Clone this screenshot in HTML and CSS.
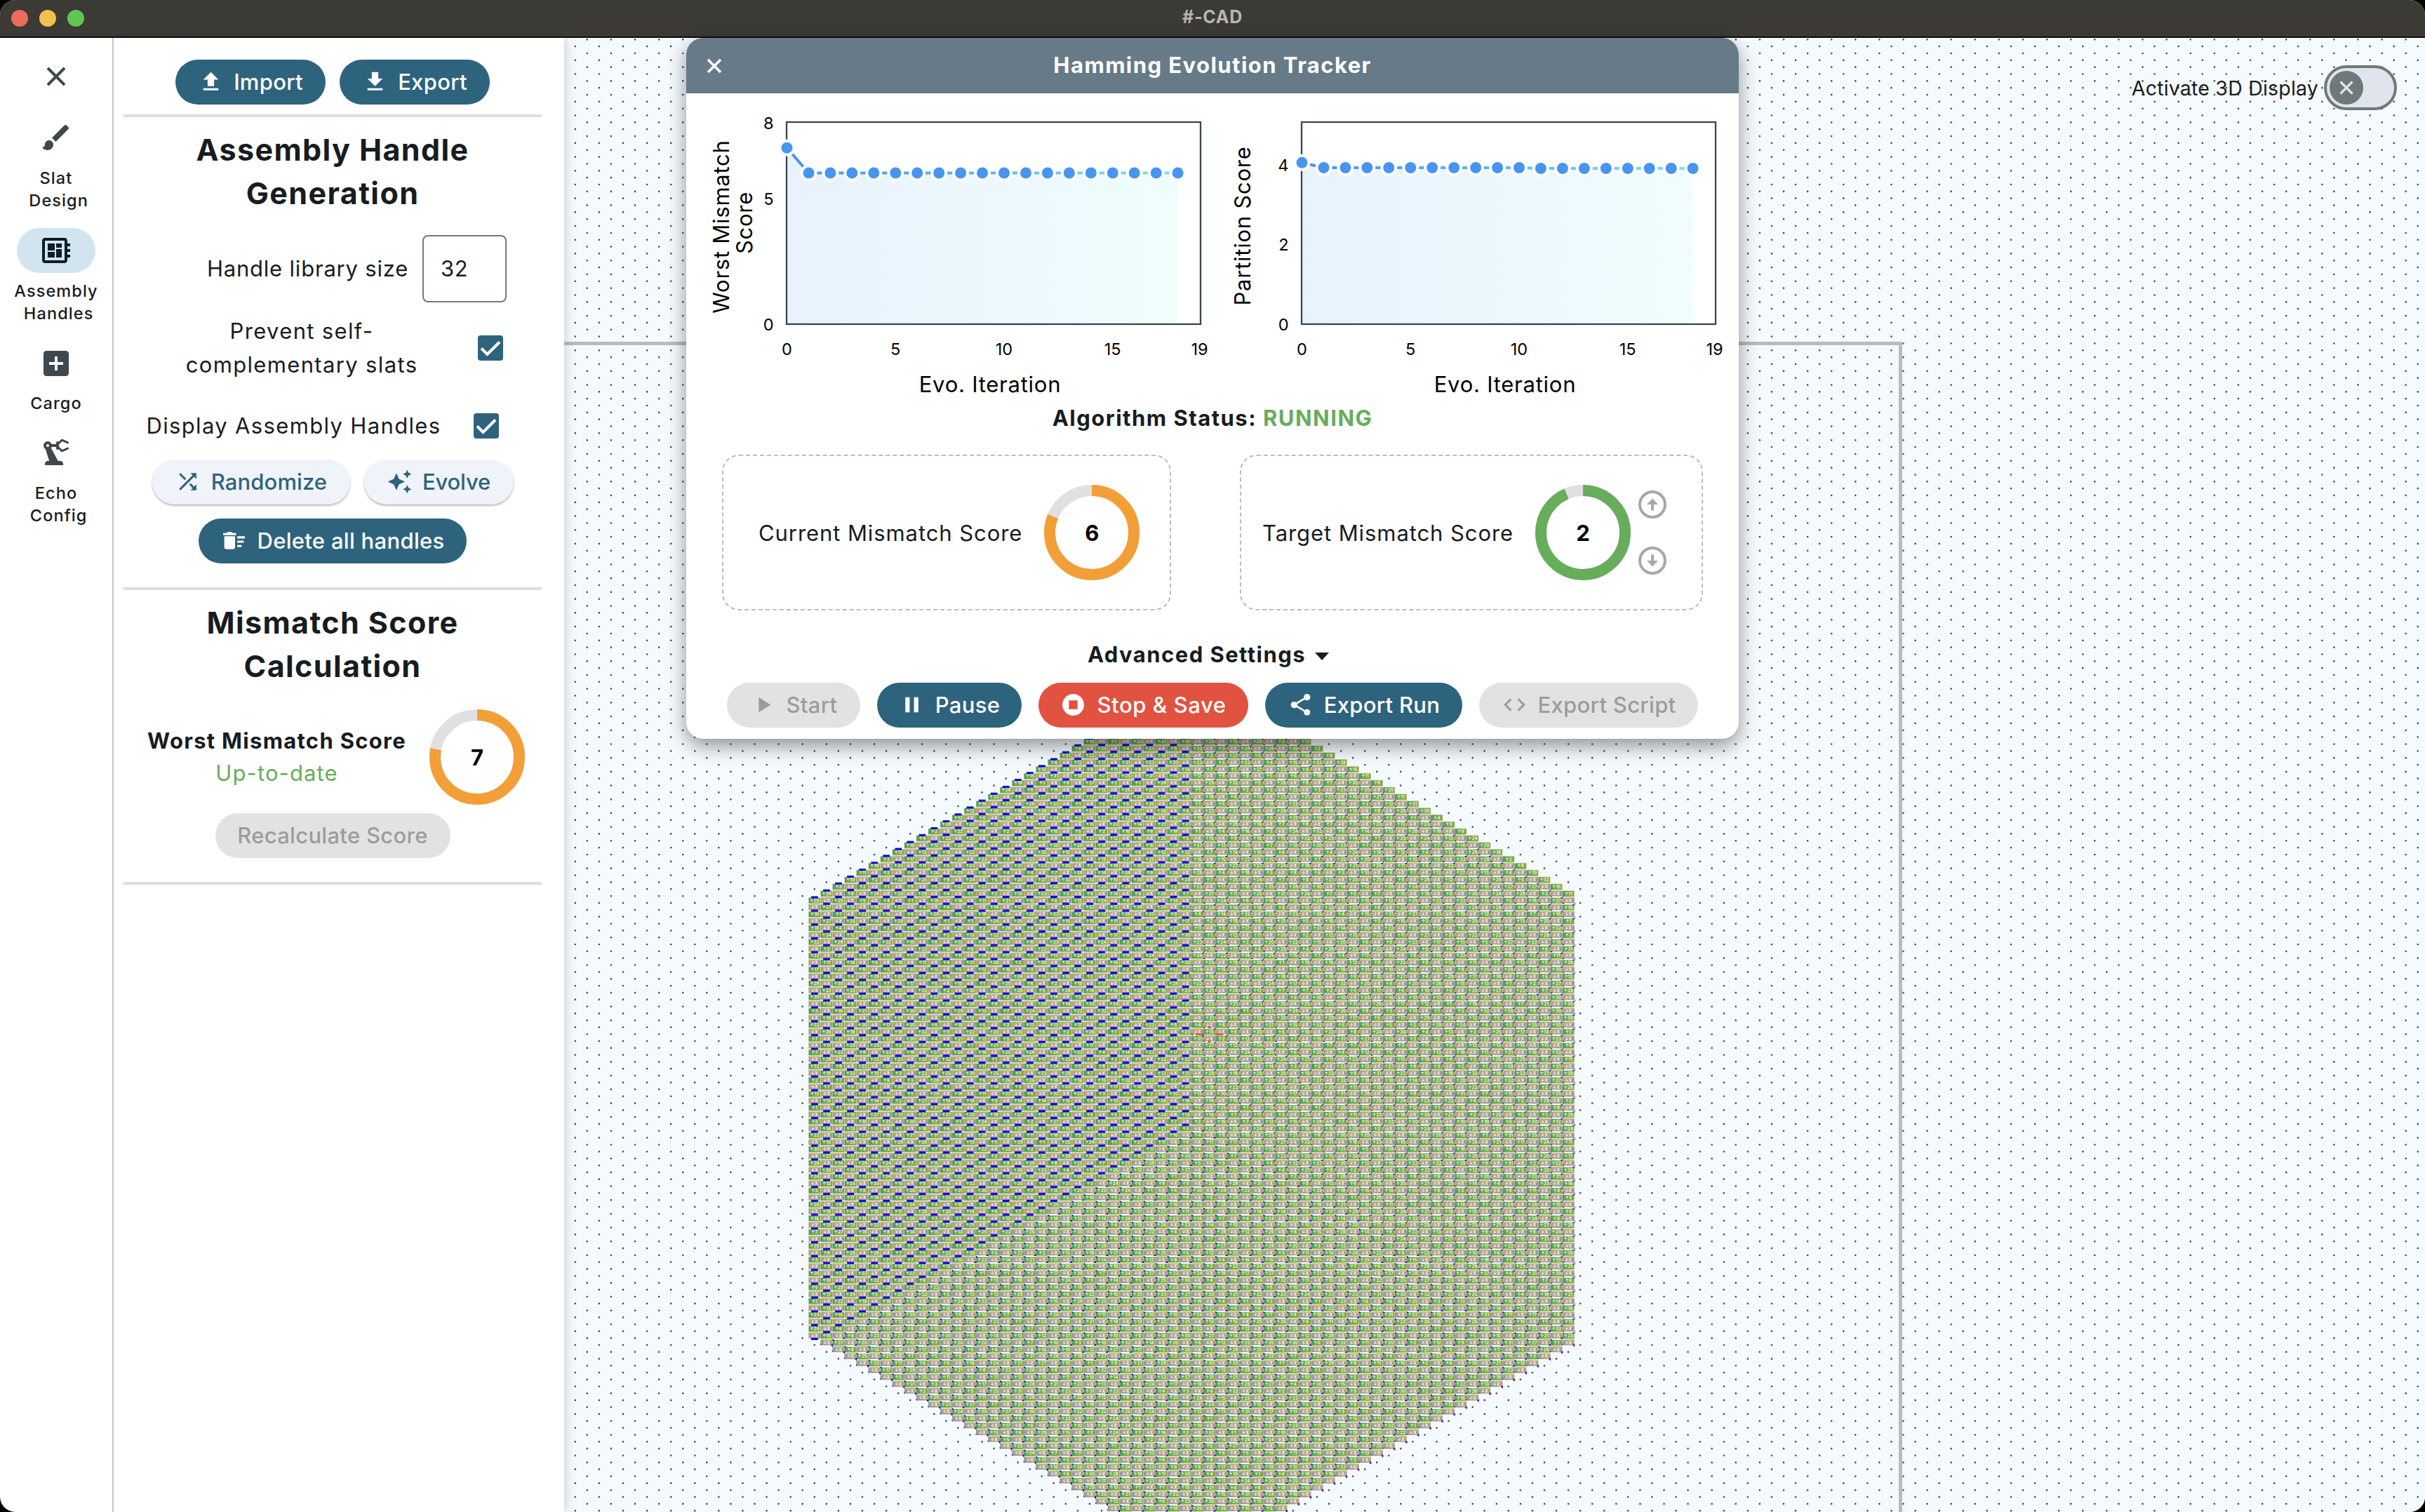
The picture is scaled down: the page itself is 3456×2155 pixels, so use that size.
FILE: index.html
```html
<!DOCTYPE html>
<html lang="en">
<head>
<meta charset="utf-8">
<title>#-CAD</title>
<link rel="stylesheet" href="styles.css">
</head>
<body>
<div class="window">
  <header class="titlebar">
    <div class="lights"><i class="light red"></i><i class="light yellow"></i><i class="light green"></i></div>
    <div class="window-title">#-CAD</div>
  </header>
  <div class="body">
    <nav class="rail">
      <svg class="rail-close" viewBox="0 0 28 28"><path d="M2 2 26 26M26 2 2 26" fill="none" stroke="#3f484c" stroke-width="4"/></svg>
      <a class="rail-item">
        <span class="pill"><svg class="icon48" viewBox="0 0 24 24"><path d="M7 14c-1.66 0-3 1.34-3 3 0 1.31-1.16 2-2 2 .92 1.22 2.49 2 4 2 2.21 0 4-1.79 4-4 0-1.66-1.34-3-3-3zm13.71-9.37l-1.34-1.34c-.39-.39-1.02-.39-1.41 0L9 12.25 11.75 15l8.96-8.96c.39-.39.39-1.02 0-1.41z"/></svg></span>
        <span class="rail-label">Slat
 Design</span>
      </a>
      <a class="rail-item active">
        <span class="pill"><svg class="icon48" viewBox="0 0 24 24"><path d="M22 9V7h-2V5c0-1.100-.9-2-2-2H4c-1.100 0-2 .9-2 2v14c0 1.100.9 2 2 2h14c1.100 0 2-.9 2-2v-2h2v-2h-2v-2h2v-2h-2V9h2zm-4 10H4V5h14v14zM6 13h5v4H6v-4zm6-6h4v3h-4V7zM6 7h5v5H6V7zm6 4h4v6h-4v-6z"/></svg></span>
        <span class="rail-label">Assembly
 Handles</span>
      </a>
      <a class="rail-item single">
        <span class="pill"><svg class="icon48" viewBox="0 0 24 24"><path d="M19 3H5c-1.110 0-2 .9-2 2v14c0 1.100.89 2 2 2h14c1.100 0 2-.9 2-2V5c0-1.100-.9-2-2-2zm-2 10h-4v4h-2v-4H7v-2h4V7h2v4h4v2z"/></svg></span>
        <span class="rail-label">Cargo</span>
      </a>
      <a class="rail-item">
        <span class="pill"><svg class="icon48" viewBox="0 0 24 24"><path d="M19.930 8.350l-3.600 1.680L14 7.700V6.300l2.330-2.330 3.600 1.680c.38.18.82.010 1-.36.18-.38.010-.82-.36-1l-3.920-1.830c-.38-.18-.83-.1-1.130.2L13.780 4.400c-.18-.24-.46-.4-.78-.4-.55 0-1 .45-1 1v1H8.820C8.400 4.840 7.300 4 6 4 4.340 4 3 5.340 3 7c0 1.100.6 2.050 1.480 2.580L7.080 18H6c-1.100 0-2 .9-2 2v1h13v-1c0-1.100-.9-2-2-2h-1.620L8.410 8.770c.17-.24.310-.49.410-.77H12v1c0 .55.45 1 1 1 .32 0 .6-.16.780-.4l1.740 1.740c.3.3.75.380 1.130.2l3.920-1.830c.38-.18.540-.62.360-1-.18-.37-.62-.54-1-.36zM6 8c-.55 0-1-.45-1-1s.45-1 1-1 1 .45 1 1-.45 1-1 1z"/></svg></span>
        <span class="rail-label">Echo
 Config</span>
      </a>
    </nav>

    <aside class="panel">
      <div class="row io">
        <button class="btn primary b-io"><svg class="icon36" viewBox="0 0 24 24"><path d="M5 20h14v-2H5v2zM5 10h4v6h6v-6h4l-7-7-7 7z"/></svg><span>Import</span></button>
        <button class="btn primary b-io"><svg class="icon36" viewBox="0 0 24 24"><path d="M19 9h-4V3H9v6H5l7 7 7-7zM5 18v2h14v-2H5z"/></svg><span>Export</span></button>
      </div>
      <hr class="rule">
      <h2 class="heading">Assembly Handle<br>Generation</h2>
      <div class="row library"><label>Handle library size</label><div class="field">32</div></div>
      <div class="row prevent"><label>Prevent self-<br>complementary slats</label>
        <span class="check"><svg viewBox="0 0 36 36"><path d="M5 18.500 13.500 27 31 9.500" fill="none" stroke="#fff" stroke-width="4"/></svg></span></div>
      <div class="row display"><label>Display Assembly Handles</label>
        <span class="check"><svg viewBox="0 0 36 36"><path d="M5 18.500 13.500 27 31 9.500" fill="none" stroke="#fff" stroke-width="4"/></svg></span></div>
      <div class="row tools">
        <button class="btn tonal b-rand"><svg class="icon36" viewBox="0 0 24 24"><path d="M10.590 9.170L5.410 4 4 5.410l5.170 5.170 1.420-1.410zM14.500 4l2.040 2.040L4 18.590 5.410 20 17.960 7.460 20 9.500V4h-5.500zm.330 9.410l-1.410 1.410 3.130 3.130L14.500 20H20v-5.500l-2.040 2.040-3.130-3.130z"/></svg><span>Randomize</span></button>
        <button class="btn tonal b-evo"><svg class="icon36" viewBox="0 0 24 24"><path d="M19 9l1.250-2.750L23 5l-2.750-1.250L19 1l-1.250 2.750L15 5l2.750 1.250L19 9zm-7.500.5L9 4 6.500 9.500 1 12l5.500 2.500L9 20l2.500-5.500L17 12l-5.500-2.500zM19 15l-1.250 2.750L15 19l2.750 1.250L19 23l1.250-2.750L23 19l-2.750-1.250L19 15z"/></svg><span>Evolve</span></button>
      </div>
      <button class="btn primary b-del"><svg class="icon36" viewBox="0 0 24 24"><path d="M15 16h4v2h-4zm0-8h7v2h-7zm0 4h6v2h-6zM3 18c0 1.100.9 2 2 2h6c1.100 0 2-.9 2-2V8H3v10zM14 5h-3l-1-1H6L5 5H2v2h12z"/></svg><span>Delete all handles</span></button>
      <hr class="rule second">
      <h2 class="heading">Mismatch Score<br>Calculation</h2>
      <div class="row score">
        <div class="score-text"><b>Worst Mismatch Score</b><span class="ok">Up-to-date</span></div>
        <div class="ring"><svg viewBox="0 0 136 136"><circle class="track" cx="68" cy="68" r="60"/><circle class="arc orange" cx="68" cy="68" r="60" pathLength="100" stroke-dasharray="78 100"/></svg><b>7</b></div>
      </div>
      <button class="btn disabled b-recalc"><span>Recalculate Score</span></button>
      <hr class="rule third">
    </aside>

    <main class="workspace">
      <svg class="lattice" viewBox="804 54 2652 2101">
        <defs>
          <linearGradient id="leaf"><stop offset="0" stop-color="#4a9c5a"/><stop offset=".5" stop-color="#69a850"/><stop offset="1" stop-color="#7fac4e"/></linearGradient>
          <g id="num"><rect class="cream" y="-.8" width="17.100" height="10.600"/><rect x=".3" width="16.500" height="7.600" fill="url(#leaf)"/></g>
          <g id="xr"><rect class="cream" y="-.8" width="17.100" height="9.500"/><rect class="tan" x=".2" width="16.700" height="7.300"/><path class="gray" d="M16.900 0V7.300H6z"/></g>
          <g id="xl"><rect class="cream" y="-.8" width="17.100" height="8.600"/><rect class="tan" x=".2" width="16.700" height="7.300"/><path class="gray" d="M.2 0V7.300H11z"/></g>
          <g id="ga"><rect class="blue" x="3.700" y="7" width="9.800" height="3"/></g>
          <g id="gb"><path fill="#fff" d="M1 7.500 15 8.200 16.500 9.600 3 9.400z"/><path class="blue" d="M-.5 5.800 3.500 8.400.5 8.200zM17.600 6.800 18.400 7.600 16.800 11 13.500 9.300 17 9.300z"/></g>
          <g id="gc"><path fill="#fff" d="M1 9.600 3 8.300 16 7.500 14 9.400z"/><path class="blue" d="M17.500 5.500V8.300L13.500 8.300zM0 8.300V11L3 9.800z"/></g>
          <g id="gc-end"><path class="blue" d="M17.500 5.500V10L14.500 7.500zM-.5 5V7L1.500 7.300z"/></g>
        </defs>
        <path id="dots"/>
        <path d="M804 489.500H2708.500V2160" fill="none" stroke="#bbb" stroke-width="5"/>
        <g id="tiles"></g>
        <path fill="#e4533c" d="M1704 1472.700h11.300v3H1704zM1731.700 1472.700H1743v3h-11.300zM1721.700 1462.700h3.600v3.300h-3.600zM1721.700 1482.700h3.600v3.300h-3.600z"/>
      </svg>

      <div class="switch-row"><span>Activate 3D Display</span><div class="switch"><i class="knob"><svg viewBox="0 0 20 20"><path d="M1.500 1.500 18.500 18.500M18.500 1.500 1.500 18.500" fill="none" stroke="#e1e4e8" stroke-width="3.200"/></svg></i></div></div>

      <section class="dialog">
        <header class="dialog-head"><svg class="dialog-close" viewBox="0 0 22 22"><path d="M2 2 20 20M20 2 2 20" fill="none" stroke="#fff" stroke-width="3.600"/></svg><h3>Hamming Evolution Tracker</h3></header>
        <svg class="charts" viewBox="978 133 1500 436">
          <defs>
            <linearGradient id="line"><stop offset="0" stop-color="#4895ef"/><stop offset=".3" stop-color="#55a5f0"/><stop offset="1" stop-color="#80e0fa"/></linearGradient>
            <linearGradient id="area"><stop offset="0" stop-color="#e8f2fd"/><stop offset="1" stop-color="#f0fdfd"/></linearGradient>
          </defs>
          <g id="chart1"></g>
          <g id="chart2"></g>
          <g class="axis-title">
            <text x="1411" y="559">Evo. Iteration</text><text x="2145" y="559">Evo. Iteration</text>
            <text transform="translate(1038.500 323) rotate(-90)">Worst Mismatch</text>
            <text transform="translate(1071.500 317.500) rotate(-90)">Score</text>
            <text transform="translate(1782 322) rotate(-90)">Partition Score</text>
          </g>
        </svg>
        <p class="status">Algorithm Status: <span class="running">RUNNING</span></p>
        <div class="cards">
          <div class="card current"><span>Current Mismatch Score</span>
            <div class="ring"><svg viewBox="0 0 136 136"><circle class="track" cx="68" cy="68" r="60"/><circle class="arc orange" cx="68" cy="68" r="60" pathLength="100" stroke-dasharray="81.300 100"/></svg><b>6</b></div></div>
          <div class="card target"><span>Target Mismatch Score</span>
            <div class="ring"><svg viewBox="0 0 136 136"><circle class="track" cx="68" cy="68" r="60"/><circle class="arc leaf" cx="68" cy="68" r="60" pathLength="100" stroke-dasharray="93.600 100"/></svg><b>2</b></div>
            <div class="steppers">
              <svg viewBox="0 0 40 40"><circle cx="20" cy="20" r="18"/><path d="M20 28.500V14"/><path class="fill" d="M12 20 20 11.500 28 20z"/></svg>
              <svg viewBox="0 0 40 40"><circle cx="20" cy="20" r="18"/><path d="M20 11.500V26"/><path class="fill" d="M12 20 20 28.500 28 20z"/></svg>
            </div></div>
        </div>
        <p class="advanced"><span>Advanced Settings</span><i class="caret"></i></p>
        <div class="actions">
          <button class="btn disabled a1"><svg class="icon36" viewBox="0 0 24 24"><path d="M8 5v14l11-7z"/></svg><span>Start</span></button>
          <button class="btn primary a2"><svg class="icon36" viewBox="0 0 24 24"><path d="M6 19h4V5H6v14zm8-14v14h4V5h-4z"/></svg><span>Pause</span></button>
          <button class="btn danger a3"><svg class="icon36" viewBox="0 0 24 24"><path d="M12 2C6.480 2 2 6.480 2 12s4.480 10 10 10 10-4.480 10-10S17.520 2 12 2zm4 14H8V8h8v8z"/></svg><span>Stop &amp; Save</span></button>
          <button class="btn primary a4"><svg class="icon36" viewBox="0 0 24 24"><path d="M18 16.080c-.76 0-1.440.3-1.960.77L8.910 12.700c.05-.23.090-.46.090-.7s-.04-.47-.09-.7l7.050-4.110c.54.5 1.250.810 2.040.810 1.660 0 3-1.340 3-3s-1.340-3-3-3-3 1.340-3 3c0 .24.040.470.090.700L8.040 9.810C7.500 9.310 6.790 9 6 9c-1.660 0-3 1.340-3 3s1.340 3 3 3c.79 0 1.500-.31 2.040-.81l7.120 4.160c-.05.210-.08.430-.08.650 0 1.610 1.310 2.920 2.920 2.920 1.610 0 2.920-1.310 2.920-2.920s-1.310-2.920-2.920-2.920z"/></svg><span>Export Run</span></button>
          <button class="btn disabled a5"><svg class="icon36" viewBox="0 0 24 24"><path d="M9.400 16.600L4.800 12l4.600-4.600L8 6l-6 6 6 6 1.400-1.400zm5.200 0l4.600-4.600-4.600-4.600L16 6l6 6-6 6-1.400-1.400z"/></svg><span>Export Script</span></button>
        </div>
      </section>
    </main>
  </div>
</div>
<script src="app.js"></script>
</body>
</html>
```
FILE: app.js
```js
// Slat lattice: 64 columns of alternating handle-number and X tiles.
const PITCH_X = 17.052;
const PITCH_Y = 9.845;
const COLUMNS = 64;
const HALF = 32;
const LEFT = 1152.3;
const TOP = 1279.7;

let seed = 7;
function nextHandle() {
  seed = (seed * 1103515245 + 12345) % 2147483648;
  return 1 + Math.floor((seed / 2147483648) * 32);
}

// Background grid: zero-length round-capped strokes, one per lattice site.
function drawDots() {
  let d = '';
  for (let c = -21; c < 136; c++) {
    const x = (LEFT + 8.5 + c * PITCH_X).toFixed(1);
    const phase = Math.abs(c % 2) === 1 ? 56.3 : 66.1;
    for (let y = phase; y < 2160; y += 2 * PITCH_Y) d += `M${x} ${y.toFixed(1)}h0`;
  }
  document.getElementById('dots').setAttribute('d', d);
}

function drawLattice() {
  const tiles = [];
  const gaps = [];
  const labels = [];
  for (let c = 0; c < COLUMNS; c++) {
    const x = LEFT + c * PITCH_X;
    const first = c < HALF ? TOP - c * PITCH_Y : 1269.9 - (COLUMNS - 1 - c) * PITCH_Y;
    const last = c < HALF ? 1899.8 + c * PITCH_Y : 1909.8 + (COLUMNS - 1 - c) * PITCH_Y;
    const split = c < HALF ? 1908 - c * PITCH_Y : 1603 + (c - HALF) * PITCH_Y;
    if (c < HALF) gaps.push(`<use href="#ga" x="${x.toFixed(1)}" y="${(first - 9.3).toFixed(1)}"/>`);
    for (let y = first, i = 0; y < last + 1; y += PITCH_Y, i++) {
      if (y < 1030 || y > 2160) continue;
      const at = `x="${x.toFixed(1)}" y="${y.toFixed(1)}"`;
      const mid = (x + PITCH_X / 2).toFixed(1);
      const base = (y + 5.9).toFixed(1);
      if (i % 2 === 0) {
        tiles.push(`<use href="#num" ${at}/>`);
        labels.push(`<text x="${mid}" y="${base}">↑${nextHandle()}</text>`);
      } else {
        const upper = y + 7 < split;
        const end = y > last - 1;
        tiles.push(`<use href="#${upper ? 'xr' : 'xl'}" ${at}/>`);
        gaps.push(`<use href="#${upper ? (c < HALF ? 'ga' : 'gb') : (end ? 'gc-end' : 'gc')}" ${at}/>`);
        labels.push(`<text class="x" x="${mid}" y="${base}">↓X</text>`);
      }
    }
  }
  document.getElementById('tiles').innerHTML =
    tiles.join('') + gaps.join('') + `<g class="handles">${labels.join('')}</g>`;
}

function drawChart(id, left, yTicks, points) {
  const step = 30.95;
  const xs = points.map((_, i) => left + 1.5 + i * step);
  const path = points.map((y, i) => `${xs[i].toFixed(1)} ${y}`).join('L');
  let out = `<path d="M${path}V462H${xs[0]}Z" fill="url(#area)"/>`;
  out += `<rect x="${left + 1}" y="174" width="590" height="288" class="frame"/>`;
  out += `<path d="M${path}" class="series"/>`;
  out += points.map((y, i) => `<circle class="point" cx="${xs[i].toFixed(1)}" cy="${y}" r="10"/>`).join('');
  out += yTicks.map(([t, y]) => `<text class="tick end" x="${left - 17.5}" y="${y + 8.5}">${t}</text>`).join('');
  out += [0, 5, 10, 15, 19].map(t => `<text class="tick" x="${left + 1.5 + t * step}" y="505.500">${t}</text>`).join('');
  document.getElementById(id).innerHTML = out;
}

drawDots();
drawLattice();
drawChart('chart1', 1120, [[8, 175], [5, 283], [0, 462]], [210.700].concat(Array(18).fill(246.5)));
drawChart('chart2', 1854, [[4, 235], [2, 348], [0, 462]],
  [231.8].concat(Array(10).fill(239), Array(8).fill(240)));
```
FILE: styles.css
```css
* { box-sizing: border-box; }
body { margin: 0; background: #000; font-family: Inter, "Liberation Sans", sans-serif; color: #181c1f; }
.window { width: 3456px; height: 2155px; display: flex; flex-direction: column; overflow: hidden; border-radius: 22px; background: #fff; }
.titlebar { height: 54px; flex: none; background: #3c3a35; border-bottom: 2px solid #0c0b0a; display: grid; grid-template-columns: 1fr auto 1fr; align-items: center; }
.lights { display: flex; gap: 16px; padding-left: 16px; }
.light { width: 24px; height: 24px; border-radius: 50%; }
.red { background: #ec6a5e; }
.yellow { background: #f4bf4f; }
.green { background: #61c554; }
.window-title { font-size: 25px; font-weight: 700; letter-spacing: .7px; color: #b6b5b3; padding-bottom: 4px; }
.body { flex: 1; display: flex; min-height: 0; }

.rail { width: 162px; flex: none; border-right: 2px solid #bfc8cc; display: flex; flex-direction: column; align-items: center; padding-top: 41px; }
.rail-close { width: 28px; height: 28px; margin-bottom: 41px; }
.rail-item { display: flex; flex-direction: column; align-items: center; height: 161px; }
.rail-item.single { height: 127px; }
.pill { width: 112px; height: 64px; border-radius: 32px; display: flex; align-items: center; justify-content: center; }
.active .pill { background: #d3e4f1; }
.icon48 { width: 48px; height: 48px; fill: #3f484c; }
.active .icon48 { fill: #0c1d28; }
.rail-label { white-space: pre; text-align: center; font-size: 23.5px; font-weight: 500; letter-spacing: 1.1px; line-height: 32px; margin-top: 10px; }
.rail-item.single .rail-label { margin-top: 9px; }

.panel { width: 642px; flex: none; display: flex; flex-direction: column; align-items: center; padding: 31px 18px 0 0; z-index: 1; background: #fff; box-shadow: 0 0 16px rgba(40, 60, 80, .28); clip-path: inset(0 -30px 0 0); }
.row { display: flex; align-items: center; flex: none; }
.btn { font: 500 31px/60px Inter, "Liberation Sans", sans-serif; letter-spacing: .3px; border: 0; height: 64px; border-radius: 32px; display: flex; align-items: center; justify-content: center; padding: 0 0 1px; white-space: nowrap; flex: none; }
.icon36 { width: 37px; height: 37px; fill: currentColor; flex: none; }
.primary { background: #2e637d; color: #fff; }
.tonal { background: #f0f3f9; color: #2e637d; box-shadow: 0 2px 3px rgba(0, 0, 0, .28); }
.disabled { background: #e2e2e2; color: #9b9c9e; }
.danger { background: #e15241; color: #fff; }
.io { gap: 20px; }
.b-io { width: 214px; gap: 14px; }
.rule { border: 0; width: 596px; height: 4px; background: #dedede; margin: 14px 0 0; flex: none; }
.heading { font-size: 43px; font-weight: 700; line-height: 62px; text-align: center; margin: 15px 0 0; letter-spacing: 1.4px; flex: none; white-space: nowrap; }
label { font-size: 31px; line-height: 48px; text-align: center; letter-spacing: 1.35px; white-space: nowrap; }
.library { margin-top: 29px; height: 96px; gap: 20px; padding-left: 69px; }
.library label { letter-spacing: .8px; }
.field { width: 120px; height: 96px; border: 2px solid #70787d; border-radius: 8px; font-size: 31px; line-height: 92px; padding-left: 24px; letter-spacing: .4px; }
.prevent { margin-top: 17px; height: 96px; gap: 86px; padding-left: 34px; }
.check { width: 36px; height: 36px; background: #2e637d; border-radius: 4px; display: block; }
.check svg { display: block; }
.display { margin-top: 45px; height: 36px; gap: 46px; padding-right: 29px; }
.tools { gap: 20px; margin-top: 30px; }
.b-rand { width: 282px; gap: 15px; letter-spacing: .1px; }
.b-evo { width: 213px; gap: 14px; letter-spacing: -.2px; }
.b-del { width: 382px; margin-top: 20px; gap: 15px; }
.second { margin-top: 34px; }
.score { margin-top: 31px; gap: 33px; padding-left: 10px; }
.score-text { display: flex; flex-direction: column; align-items: center; line-height: 46px; font-size: 31px; letter-spacing: 1.3px; }
.ok { color: #67ad5b; letter-spacing: 1.1px; }
.ring { width: 136px; height: 136px; display: grid; place-items: center; flex: none; color: #000; font-size: 31px; letter-spacing: 0; }
.ring svg, .ring b { grid-area: 1 / 1; }
.ring svg { width: 136px; height: 136px; transform: rotate(-90deg); }
.track, .arc { fill: none; stroke: #e0e0e0; stroke-width: 16; }
.arc.orange { stroke: #f29f38; }
.arc.leaf { stroke: #67ad5b; }
.b-recalc { width: 335px; margin-top: 12px; }
.third { margin-top: 34px; }

.workspace { flex: 1; position: relative; background: #f5fafe; }
.lattice { position: absolute; inset: 0; width: 2652px; height: 2101px; }
#dots { fill: none; stroke: #4c4f52; stroke-width: 2.7; stroke-linecap: round; }
.cream { fill: #dcd6ad; }
.tan { fill: #b0a286; }
.gray { fill: #9a9b9f; }
.blue { fill: #1400e6; }
.handles { font-size: 6.3px; font-weight: 700; text-anchor: middle; fill: #f4eecb; }
.x { fill: #f6f2ea; }

.switch-row { position: absolute; right: 40px; top: 39px; display: flex; align-items: center; gap: 8px; font-size: 28.5px; letter-spacing: .2px; }
.switch { width: 104px; height: 64px; border-radius: 32px; border: 4px solid #6f797c; background: #e1e4ea; padding: 4px; }
.knob { width: 48px; height: 48px; border-radius: 50%; background: #6f797c; display: grid; place-items: center; }
.knob svg { width: 20px; height: 20px; }

.dialog { position: absolute; left: 174px; top: 0; width: 1500px; height: 999px; background: #fff; border-radius: 24px; box-shadow: 0 10px 28px rgba(0, 0, 0, .42); overflow: hidden; display: flex; flex-direction: column; }
.dialog-head { height: 79px; background: #667b87; display: grid; grid-template-columns: 1fr auto 1fr; align-items: center; color: #fff; }
.dialog-head h3 { margin: 0 0 2px; font-size: 31px; font-weight: 700; letter-spacing: 1.45px; }
.dialog-close { width: 22px; height: 22px; margin-left: 29px; }
.charts { width: 1500px; height: 436px; display: block; }
.frame { fill: none; stroke: #37474f; stroke-width: 2.3; }
.series { fill: none; stroke: url(#line); stroke-width: 4; }
.point { fill: #4895ef; stroke: #fff; stroke-width: 4; }
.tick { font-size: 23.5px; text-anchor: middle; fill: #000; }
.tick.end { text-anchor: end; }
.axis-title { font-size: 31px; letter-spacing: .75px; text-anchor: middle; fill: #000; }
.status { margin: 0; height: 79px; line-height: 54px; text-align: center; font-size: 31px; font-weight: 700; letter-spacing: 1.5px; }
.running { color: #67ad5b; }
.cards { display: flex; gap: 98px; padding: 0 51px; }
.card { height: 222px; border: 2px dashed #bdbdbd; border-radius: 24px; display: flex; align-items: center; font-size: 31px; letter-spacing: .92px; white-space: nowrap; }
.current { width: 640px; padding-left: 50px; gap: 31px; }
.target { width: 660px; padding-left: 30px; gap: 31px; }
.steppers { display: flex; flex-direction: column; gap: 40px; margin-left: -20px; }
.steppers svg { width: 40px; height: 40px; fill: none; stroke: #a8a8a8; stroke-width: 4; }
.steppers .fill { fill: #a8a8a8; stroke: none; }
.advanced { margin: 31px 0 8px; height: 64px; display: flex; align-items: center; justify-content: center; gap: 13px; font-size: 31px; font-weight: 700; letter-spacing: 1.45px; padding-right: 12px; line-height: 46px; }
.caret { border: 10.5px solid transparent; border-top: 11px solid #181c1f; border-bottom: 0; margin-top: 4px; }
.actions { display: flex; gap: 24px; padding-left: 58px; }
.actions .btn { gap: 15px; }
.a1 { width: 190px; }
.a2 { width: 206px; }
.actions .a3 { width: 299px; letter-spacing: .6px; }
.a4 { width: 281px; }
.a5 { width: 312px; }
```
